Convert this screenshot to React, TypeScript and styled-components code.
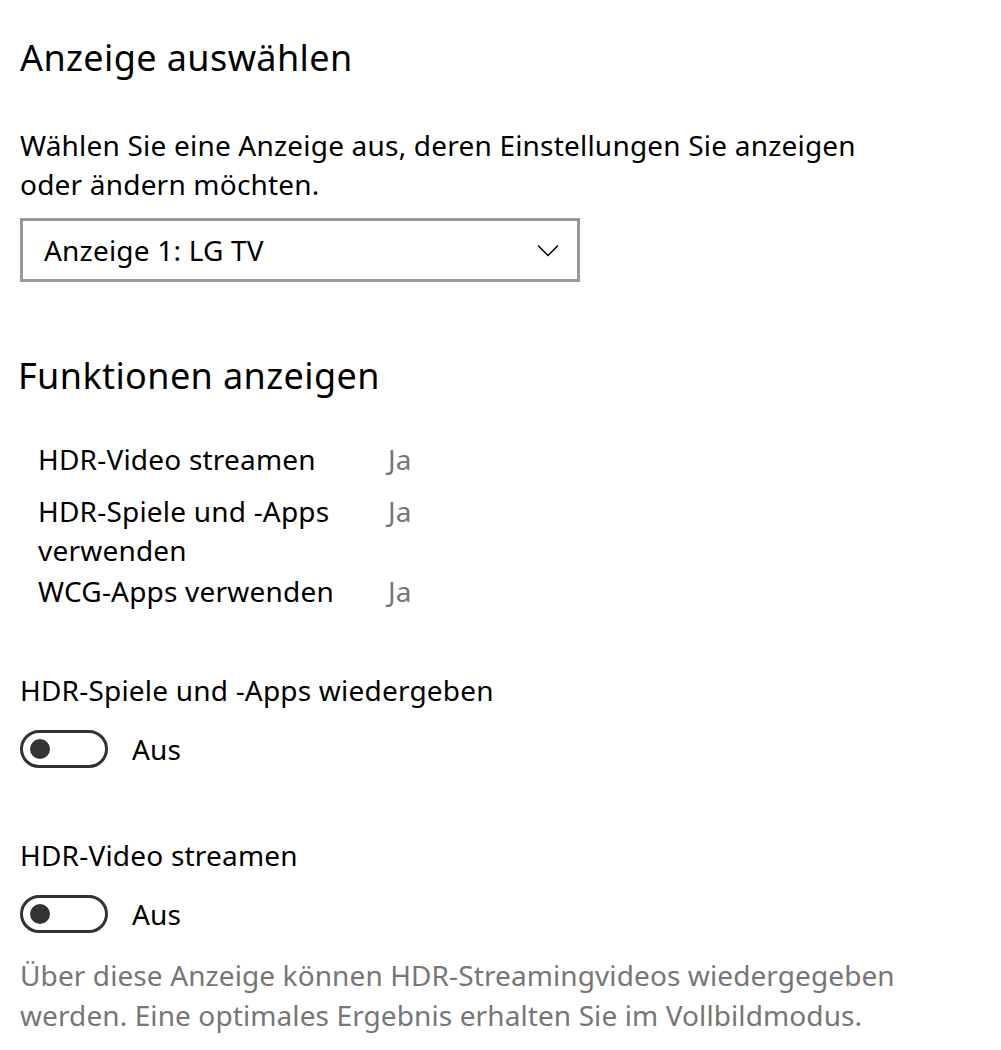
import React from 'react';
import styled, { createGlobalStyle } from 'styled-components';

const GlobalStyle = createGlobalStyle`
  html, body {
    margin: 0;
    padding: 0;
    background: #ffffff;
  }
  body {
    font-family: "Noto Sans", "Open Sans", sans-serif;
    color: #000000;
  }
`;

const Page = styled.div`
  width: 1001px;
  padding: 30px 0 0 20px;
  box-sizing: border-box;
`;

const Heading = styled.h2<{ $shift?: number }>`
  margin: 0 0 0 ${p => p.$shift ?? 0}px;
  font-size: 36px;
  font-weight: 400;
  line-height: 56px;
  letter-spacing: 0.4px;
`;

const Text = styled.p<{ $muted?: boolean }>`
  margin: 0;
  font-size: 28px;
  line-height: ${p => (p.$muted ? 40 : 39)}px;
  letter-spacing: ${p => (p.$muted ? 0.1 : 0.2)}px;
  max-width: ${p => (p.$muted ? 910 : 860)}px;
  color: ${p => (p.$muted ? '#767676' : '#000000')};
`;

const Section = styled.section<{ $top: number }>`
  margin-top: ${p => p.$top}px;
`;

const Select = styled.div`
  width: 560px;
  height: 64px;
  box-sizing: border-box;
  border: 3px solid #999999;
  margin-top: 14px;
  display: flex;
  align-items: center;
  justify-content: space-between;
  padding: 0 18px 0 21px;
  font-size: 28px;
  letter-spacing: 0.2px;
`;

const Features = styled.div`
  display: grid;
  grid-template-columns: 350px auto;
  grid-auto-rows: minmax(50px, auto);
  row-gap: 2px;
  margin: 36px 0 0 18px;
  width: 600px;
`;

const FeatureName = styled.div`
  font-size: 28px;
  line-height: 39px;
  letter-spacing: 0.2px;
  max-width: 320px;
`;

const FeatureValue = styled.div`
  font-size: 28px;
  line-height: 39px;
  color: #767676;
`;

const SwitchRow = styled.div<{ $below?: number }>`
  display: flex;
  align-items: center;
  gap: 24px;
  height: 38px;
  margin: 20px 0 ${p => p.$below ?? 0}px;
`;

const Track = styled.div`
  width: 88px;
  height: 38px;
  box-sizing: border-box;
  border: 3px solid #333333;
  border-radius: 19px;
  display: flex;
  align-items: center;
  padding-left: 7px;
`;

const Knob = styled.span`
  width: 20px;
  height: 20px;
  border-radius: 50%;
  background: #333333;
`;

const Chevron = () => (
  <svg width="22" height="13" viewBox="0 0 22 13" fill="none">
    <path d="M1 1.5 L11 11.5 L21 1.5" stroke="#000" strokeWidth="1.5" />
  </svg>
);

const Toggle = ({ label, below }: { label: string; below?: number }) => (
  <SwitchRow $below={below}>
    <Track>
      <Knob />
    </Track>
    <Text>{label}</Text>
  </SwitchRow>
);

const features = [
  { name: 'HDR-Video streamen', value: 'Ja' },
  { name: 'HDR-Spiele und -Apps verwenden', value: 'Ja' },
  { name: 'WCG-Apps verwenden', value: 'Ja' },
];

export default function App() {
  return (
    <Page>
      <GlobalStyle />
      <Heading>Anzeige auswählen</Heading>
      <Section $top={40}>
        <Text>Wählen Sie eine Anzeige aus, deren Einstellungen Sie anzeigen oder ändern möchten.</Text>
        <Select>
          <span>Anzeige 1: LG TV</span>
          <Chevron />
        </Select>
      </Section>
      <Section $top={66}>
        <Heading $shift={-2}>Funktionen anzeigen</Heading>
        <Features>
          {features.map(f => (
            <React.Fragment key={f.name}>
              <FeatureName>{f.name}</FeatureName>
              <FeatureValue>{f.value}</FeatureValue>
            </React.Fragment>
          ))}
        </Features>
      </Section>
      <Section $top={49}>
        <Text>HDR-Spiele und -Apps wiedergeben</Text>
        <Toggle label="Aus" />
      </Section>
      <Section $top={68}>
        <Text>HDR-Video streamen</Text>
        <Toggle label="Aus" below={22} />
        <Text $muted>
          Über diese Anzeige können HDR-Streamingvideos wiedergegeben werden. Eine optimales Ergebnis erhalten Sie im Vollbildmodus.
        </Text>
      </Section>
    </Page>
  );
}
